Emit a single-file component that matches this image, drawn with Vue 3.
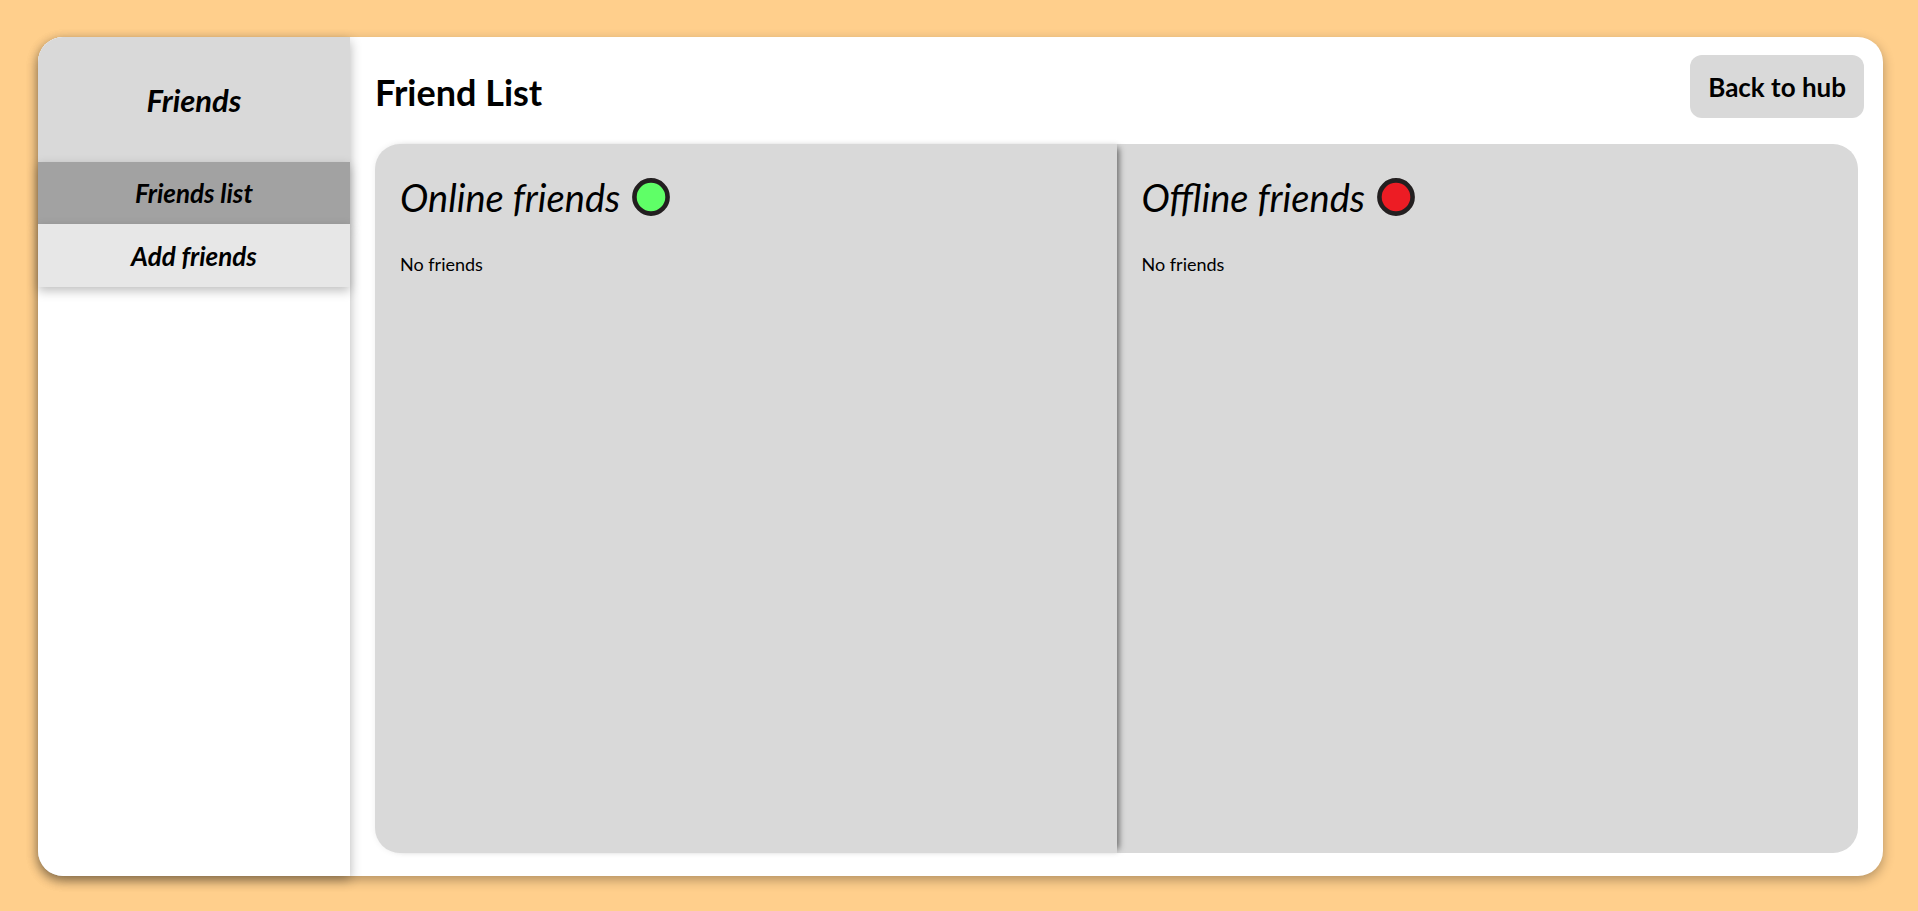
<script setup>
const links = [
  { label: 'Friends list', active: true },
  { label: 'Add friends', active: false },
]
const groups = [
  { title: 'Online friends', status: 'online' },
  { title: 'Offline friends', status: 'offline' },
]
</script>

<template>
  <div class="page">
    <div class="card">
      <aside class="sidebar">
        <h2 class="sidebar-title">Friends</h2>
        <nav class="menu">
          <a
            v-for="link in links"
            :key="link.label"
            href="#"
            class="menu-link"
            :class="{ active: link.active }"
          >{{ link.label }}</a>
        </nav>
      </aside>
      <main class="main">
        <header class="header">
          <h1 class="title">Friend List</h1>
          <button type="button" class="back">Back to hub</button>
        </header>
        <div class="panels">
          <section v-for="group in groups" :key="group.status" class="panel" :class="group.status">
            <h2 class="panel-title">
              <span>{{ group.title }}</span>
              <svg class="dot" viewBox="0 0 38 38" aria-hidden="true">
                <circle cx="19" cy="19" r="16.6" />
              </svg>
            </h2>
            <p class="empty">No friends</p>
          </section>
        </div>
      </main>
    </div>
  </div>
</template>

<style>
body {
  margin: 0;
  background: #ffcf8c;
}
</style>

<style scoped>
.page {
  box-sizing: border-box;
  min-height: 100vh;
  display: flex;
  padding: 37px 35px 35px 38px;
  background: #ffcf8c;
  color: #000;
  font-family: Lato, sans-serif;
}
.card {
  flex: 1;
  display: flex;
  border-radius: 25px;
  background: #fff;
  box-shadow: 0 4px 12px rgba(0, 0, 0, 0.3);
}
.sidebar {
  position: relative;
  flex: none;
  width: 312px;
  border-radius: 25px 0 0 25px;
  background: #fff;
  box-shadow: 0 4px 12px rgba(0, 0, 0, 0.3);
}
.sidebar-title {
  display: flex;
  align-items: center;
  justify-content: center;
  height: 125px;
  margin: 0;
  border-radius: 25px 0 0 0;
  background: #d9d9d9;
  font-size: 31px;
  font-style: italic;
  font-weight: 700;
}
.menu {
  display: flex;
  flex-direction: column;
}
.menu-link {
  display: flex;
  align-items: center;
  justify-content: center;
  height: 63px;
  background: #e7e7e7;
  box-shadow: 0 4px 10px rgba(0, 0, 0, 0.25);
  color: #000;
  font-size: 26px;
  font-style: italic;
  font-weight: 700;
  text-decoration: none;
}
.menu-link.active {
  height: 62px;
  background: #a2a2a2;
}
.main {
  flex: 1;
  display: flex;
  flex-direction: column;
  padding: 0 25px 23px;
}
.header {
  display: flex;
  justify-content: space-between;
  align-items: flex-start;
  height: 107px;
}
.title {
  margin: 0;
  padding-top: 33px;
  font-size: 36px;
  line-height: 44px;
  font-weight: 700;
}
.back {
  height: 63px;
  margin: 18px -6px 0 0;
  padding: 0 18px;
  border: 0;
  border-radius: 12px;
  background: #d9d9d9;
  color: #000;
  font-family: inherit;
  font-size: 26px;
  font-weight: 700;
}
.panels {
  flex: 1;
  display: flex;
  border-radius: 25px;
}
.panel {
  flex: 1;
  padding: 25px;
  background: #d9d9d9;
}
.panel.online {
  z-index: 1;
  border-radius: 25px 0 0 25px;
  box-shadow: 0 0 6px rgba(0, 0, 0, 0.07), 6px 0 6px -4px rgba(0, 0, 0, 0.5);
}
.panel.offline {
  border-radius: 0 25px 25px 0;
}
.panel-title {
  display: flex;
  align-items: center;
  gap: 12px;
  margin: 0;
  font-size: 38px;
  line-height: 56px;
  font-style: italic;
  font-weight: 400;
}
.dot {
  width: 38px;
  height: 38px;
  stroke: #231f20;
  stroke-width: 4.6;
}
.online .dot {
  fill: #5fff67;
}
.offline .dot {
  fill: #ed1c24;
}
.empty {
  margin: 27px 0 0;
  font-size: 18px;
  line-height: 24px;
}
</style>
